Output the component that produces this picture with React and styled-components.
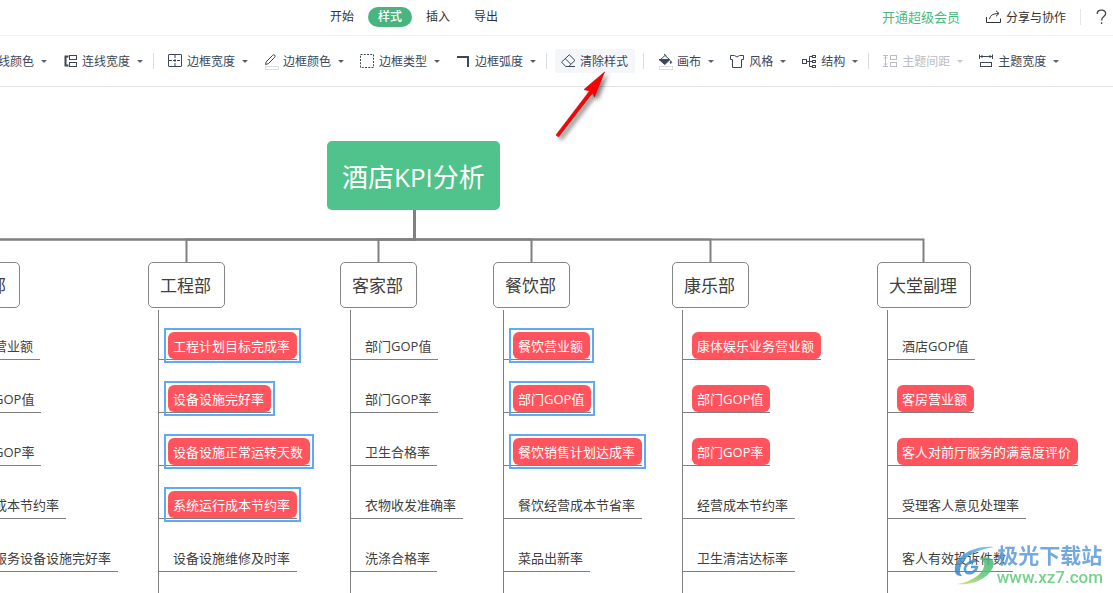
import React from "react";
import styled, { createGlobalStyle, css } from "styled-components";

const GlobalStyle = createGlobalStyle`
  * { box-sizing: border-box; }
  body {
    margin: 0;
    background: #fff;
    font-family: "Open Sans", "Noto Sans CJK SC", sans-serif;
    font-size: 12px;
    color: #333;
  }
  button {
    margin: 0;
    border: 0;
    background: none;
    font: inherit;
    color: inherit;
    cursor: pointer;
  }
  ul { list-style: none; margin: 0; padding: 0; }
  svg { display: block; flex: none; }
`;

const Page = styled.div`
  display: flex;
  flex-direction: column;
  height: 100vh;
  overflow: hidden;
`;

/* ---------- top bar ---------- */

const Header = styled.header`
  display: flex;
  align-items: center;
  justify-content: space-between;
  flex: none;
  height: 36px;
  padding: 0 6px 2px 320px;
  border-bottom: 1px solid #f0f0f0;
  white-space: nowrap;
`;

const Tabs = styled.nav`
  display: flex;
  gap: 4px;
`;

const Tab = styled.button`
  width: 44px;
  height: 20px;
  padding: 0;
  border-radius: 10px;
  line-height: 20px;
  ${(p) => p.$active && css`
    background: #4ab47e;
    color: #fff;
    font-weight: 500;
  `}
`;

const Account = styled.div`
  display: flex;
  align-items: center;
`;

const VipLink = styled.a`
  margin-right: 26px;
  font-size: 13px;
  color: #4ab97f;
  text-decoration: none;
`;

const ShareButton = styled.button`
  display: flex;
  align-items: center;
  gap: 4px;
  padding: 0;
`;

const HelpButton = styled.button`
  display: flex;
  margin-left: 14px;
  padding: 0 0 0 15px;
  border-left: 1px solid #e4e6e9;
`;

/* ---------- tool bar ---------- */

const Toolbar = styled.div`
  flex: none;
  height: 51px;
  border-bottom: 1px solid #e2e2e2;
  overflow: hidden;
`;

const ToolTrack = styled.div`
  display: flex;
  align-items: center;
  height: 50px;
  margin-left: -41px;
  white-space: nowrap;
  color: #3d4757;
`;

const Tool = styled.button`
  display: flex;
  align-items: center;
  flex: none;
  height: 24px;
  padding: 0 8px 0 7px;
  ${(p) => p.$highlight && css`
    margin: 0 6px 0 2px;
    padding: 0 7px 0 5px;
    border-radius: 2px;
    background: #f4f6f9;
  `}
  &:disabled { color: #b9bdc4; }
`;

const ToolLabel = styled.span`
  margin-left: 4px;
  padding-top: 2px;
  line-height: 22px;
`;

const Caret = styled.span`
  margin-left: 7px;
  border: 3px solid transparent;
  border-top-color: currentColor;
  border-bottom: 0;
  opacity: 0.85;
`;

const Separator = styled.span`
  flex: none;
  width: 1px;
  height: 16px;
  margin: 0 6px 0 2px;
  background: #d9dce0;
`;

/* ---------- mind map ---------- */

const Canvas = styled.main`
  position: relative;
  flex: 1;
  min-height: 0;
  overflow: hidden;
`;

const Connectors = styled.svg`
  position: absolute;
  top: 0;
  left: 0;
  width: 100%;
  height: 100%;
`;

const Root = styled.h1`
  position: absolute;
  top: 54px;
  left: 327px;
  margin: 0;
  padding: 4px 15px 0;
  border-radius: 5px;
  background: #50c28b;
  color: #fff;
  font-size: 26px;
  font-weight: 400;
  line-height: 65px;
  white-space: nowrap;
`;

const Branches = styled.div`
  position: absolute;
  top: 175px;
  bottom: 0;
  left: -57px;
  display: flex;
  gap: 30px;
`;

const Branch = styled.section`
  display: flex;
  flex-direction: column;
  align-items: flex-start;
  flex: none;
  min-width: ${(p) => (p.$wide ? "175px" : "0")};
`;

const BranchTitle = styled.h2`
  flex: none;
  margin: 0;
  padding: 2px 13px 0 11px;
  border: 1px solid #858585;
  border-radius: 5px;
  background: #fff;
  font-size: 17px;
  font-weight: 400;
  line-height: 42px;
  color: #404040;
  white-space: nowrap;
`;

const Topics = styled.ul`
  display: flex;
  flex-direction: column;
  align-items: flex-start;
  flex: 1;
  gap: 3px;
  margin: 2px 0 0 10px;
  border-left: 1px solid #808080;
`;

const TopicRow = styled.li`
  padding: 22px 0 0 9px;
  border-bottom: 1px solid #808080;
`;

const Topic = styled.div`
  position: relative;
  padding: 1px 7px 0 5px;
  border-radius: 6px;
  font-size: 13px;
  line-height: 26px;
  white-space: nowrap;
  color: #404040;
  ${(p) => p.$filled && css`
    background: #ff545d;
    color: #fff;
  `}
  ${(p) => p.$selected && css`
    &::after {
      content: "";
      position: absolute;
      inset: -4px;
      border: 2px solid #62a9f5;
    }
  `}
`;

const Pointer = styled.svg`
  position: absolute;
  top: 66px;
  left: 550px;
  pointer-events: none;
`;

const Watermark = styled.div`
  position: absolute;
  right: 10px;
  bottom: 7px;
  display: flex;
  align-items: center;
  gap: 2px;
  opacity: 0.85;
  white-space: nowrap;
`;

const WatermarkText = styled.div`
  display: flex;
  flex-direction: column;
  align-items: center;
`;

const WatermarkName = styled.span`
  font-size: 21px;
  font-weight: 700;
  line-height: 25px;
  color: #5b9bd9;
`;

const WatermarkUrl = styled.span`
  font-family: Roboto, sans-serif;
  font-size: 17px;
  font-weight: 500;
  line-height: 18px;
  color: #5fc97c;
`;

/* ---------- icons ---------- */

const Glyph = ({ children }) => (
  <svg width="16" height="16" viewBox="0 0 16 16" fill="none" stroke="currentColor" overflow="visible" aria-hidden="true">
    {children}
  </svg>
);

const LineWidthIcon = () => (
  <Glyph>
    <path d="M6.5 3.5H3.5V12.5H6.5" strokeWidth="2" />
    <rect x="7.5" y="2.5" width="7" height="4" />
    <rect x="7.5" y="9.5" width="7" height="4" />
  </Glyph>
);

const BorderWidthIcon = () => (
  <Glyph>
    <rect x="1.5" y="1.5" width="13" height="12" rx="0.5" />
    <path d="M8 2V14M2 7.5H14" strokeDasharray="3 1" />
  </Glyph>
);

const PencilIcon = () => (
  <Glyph>
    <path d="M2.5 11.5L3.2 8.9L9.6 2.3Q10.8 1.3 11.7 2.2Q12.6 3.2 11.7 4.3L5.3 10.7Z" />
    <rect x="2.5" y="13.5" width="13" height="3" stroke="#dcdfe3" fill="#fff" />
  </Glyph>
);

const BorderTypeIcon = () => (
  <Glyph>
    <rect x="1.5" y="1.5" width="13" height="13" strokeDasharray="2 1.25" />
  </Glyph>
);

const CornerIcon = () => (
  <Glyph>
    <path d="M2 4H13V14" strokeWidth="2" />
  </Glyph>
);

const EraserIcon = () => (
  <Glyph>
    <path d="M2 8.6L9.3 1.8L15 7.4L8.6 13.5H5.8L2 9.6ZM5.2 5.7L10.9 11.2M5.8 13.5H15" />
  </Glyph>
);

const BucketIcon = () => (
  <Glyph>
    <path d="M3.5 6.5L8 2.5L12.5 6.5M7 1L9.5 3" />
    <path d="M2 6.5H13L7.8 11.5Z" fill="currentColor" />
    <path d="M13.8 7.5Q15.6 10 13.8 10.5Q12.2 10 13.8 7.5Z" fill="currentColor" strokeWidth="0.5" />
    <rect x="2.5" y="13.5" width="13" height="3" stroke="#dcdfe3" fill="#fff" />
  </Glyph>
);

const ShirtIcon = () => (
  <Glyph>
    <path d="M1.5 2.5H5.5Q8 5.5 10.5 2.5H14.5V6.5H12.5V14.5H3.5V6.5H1.5Z" />
  </Glyph>
);

const StructureIcon = () => (
  <Glyph>
    <rect x="1.5" y="6.5" width="4" height="4" />
    <path d="M6 8.5H11M11 3.5H8.5V13.5H11" />
    <rect x="11.5" y="2.5" width="3" height="2" />
    <rect x="11.5" y="7.5" width="3" height="2" />
    <rect x="11.5" y="12.5" width="3" height="2" />
  </Glyph>
);

const TopicGapIcon = () => (
  <Glyph>
    <path d="M1 2.5H6M1 13.5H6M3.5 3V13M2 5.5L3.5 4L5 5.5M2 10.5L3.5 12L5 10.5" />
    <rect x="8.5" y="2.5" width="6" height="4" />
    <rect x="8.5" y="9.5" width="6" height="4" />
  </Glyph>
);

const TopicWidthIcon = () => (
  <Glyph>
    <path d="M1.5 1.5V6M14.5 1.5V6M2 3.5H14M4.5 2L3 3.5L4.5 5M11.5 2L13 3.5L11.5 5" />
    <rect x="2.5" y="9.5" width="11" height="4" />
  </Glyph>
);

const ShareIcon = () => (
  <Glyph>
    <path d="M0.5 8V13.5H14.5V9.5M3.5 10Q4.5 4.5 12.5 4.5M10 1.8L13 4.5L10 7.3" />
  </Glyph>
);

const HelpIcon = () => (
  <svg width="11" height="16" viewBox="0 0 11 16" fill="none" stroke="#444" strokeWidth="1.3" aria-hidden="true">
    <path d="M1.2 5Q1.2 1.2 5.4 1.2Q9.6 1.2 9.6 4.6Q9.6 6.3 7.8 7.5Q5.6 8.9 5.6 11.5M5.6 13.2V15" />
  </svg>
);

const SwirlLogo = () => (
  <svg width="42" height="42" viewBox="0 0 42 42" aria-hidden="true">
    <defs>
      <linearGradient id="swirlBlue" x1="0" y1="1" x2="1" y2="0">
        <stop offset="0" stopColor="#2f7fc9" />
        <stop offset="1" stopColor="#6cb8ec" />
      </linearGradient>
      <linearGradient id="swirlGreen" x1="0" y1="1" x2="1" y2="0">
        <stop offset="0" stopColor="#e3e35a" />
        <stop offset="0.5" stopColor="#62c877" />
        <stop offset="1" stopColor="#3fb57a" />
      </linearGradient>
    </defs>
    <path d="M2 28C0 14 18 1 41 3C28 5 12 10 8 22C6 27 7 30 9 32C5 32 3 31 2 28Z" fill="url(#swirlBlue)" />
    <path d="M26 15C36 11 43 15 40 23C36 34 19 42 4 40C18 38 30 30 31 22C32 18 30 16 26 15Z" fill="url(#swirlGreen)" />
    <path d="M23 17C14 17 10 24 13 28C16 31 23 28 24 23H18" fill="none" stroke="#3d8fd0" strokeWidth="2.5" />
  </svg>
);

/* ---------- data ---------- */

const tabs = ["开始", "样式", "插入", "导出"];

const toolGroups = [
  [
    { label: "连线颜色", icon: PencilIcon },
    { label: "连线宽度", icon: LineWidthIcon },
  ],
  [
    { label: "边框宽度", icon: BorderWidthIcon },
    { label: "边框颜色", icon: PencilIcon },
    { label: "边框类型", icon: BorderTypeIcon },
    { label: "边框弧度", icon: CornerIcon },
  ],
  [{ label: "清除样式", icon: EraserIcon, highlight: true }],
  [
    { label: "画布", icon: BucketIcon },
    { label: "风格", icon: ShirtIcon },
    { label: "结构", icon: StructureIcon },
  ],
  [
    { label: "主题间距", icon: TopicGapIcon, disabled: true },
    { label: "主题宽度", icon: TopicWidthIcon },
  ],
];

const plain = (text) => ({ text });
const filled = (text) => ({ text, filled: true });
const selected = (text) => ({ text, filled: true, selected: true });

const branches = [
  {
    title: "客房部",
    topics: [
      plain("客房营业额"),
      plain("部门GOP值"),
      plain("部门GOP率"),
      plain("经营成本节约率"),
      plain("客房服务设备设施完好率"),
    ],
  },
  {
    title: "工程部",
    topics: [
      selected("工程计划目标完成率"),
      selected("设备设施完好率"),
      selected("设备设施正常运转天数"),
      selected("系统运行成本节约率"),
      plain("设备设施维修及时率"),
    ],
  },
  {
    title: "客家部",
    topics: [
      plain("部门GOP值"),
      plain("部门GOP率"),
      plain("卫生合格率"),
      plain("衣物收发准确率"),
      plain("洗涤合格率"),
    ],
  },
  {
    title: "餐饮部",
    topics: [
      selected("餐饮营业额"),
      selected("部门GOP值"),
      selected("餐饮销售计划达成率"),
      plain("餐饮经营成本节省率"),
      plain("菜品出新率"),
    ],
  },
  {
    title: "康乐部",
    wide: true,
    topics: [
      filled("康体娱乐业务营业额"),
      filled("部门GOP值"),
      filled("部门GOP率"),
      plain("经营成本节约率"),
      plain("卫生清洁达标率"),
    ],
  },
  {
    title: "大堂副理",
    topics: [
      plain("酒店GOP值"),
      filled("客房营业额"),
      filled("客人对前厅服务的满意度评价"),
      plain("受理客人意见处理率"),
      plain("客人有效投诉件数"),
    ],
  },
];

const branchCentres = [-220, -18, 186.5, 378.5, 531.5, 710.5, 923.5];

export default function App() {
  return (
    <Page>
      <GlobalStyle />
      <Header>
        <Tabs>
          {tabs.map((name) => (
            <Tab key={name} $active={name === "样式"}>{name}</Tab>
          ))}
        </Tabs>
        <Account>
          <VipLink href="#vip">开通超级会员</VipLink>
          <ShareButton><ShareIcon />分享与协作</ShareButton>
          <HelpButton aria-label="帮助"><HelpIcon /></HelpButton>
        </Account>
      </Header>

      <Toolbar role="toolbar">
        <ToolTrack>
          {toolGroups.map((group, index) => (
            <React.Fragment key={index}>
              {index > 0 && <Separator />}
              {group.map(({ label, icon: Icon, highlight, disabled }) => (
                <Tool key={label} $highlight={highlight} disabled={disabled}>
                  <Icon />
                  <ToolLabel>{label}</ToolLabel>
                  {!highlight && <Caret />}
                </Tool>
              ))}
            </React.Fragment>
          ))}
        </ToolTrack>
      </Toolbar>

      <Canvas>
        <Connectors fill="none" stroke="#808080" strokeWidth="2" aria-hidden="true">
          {branchCentres.map((x) => (
            <path key={x} d={`M414.5 122V152.5H${x}V176`} />
          ))}
        </Connectors>
        <Root>酒店KPI分析</Root>
        <Branches>
          {branches.map((branch) => (
            <Branch key={branch.title} $wide={branch.wide}>
              <BranchTitle>{branch.title}</BranchTitle>
              <Topics>
                {branch.topics.map((topic) => (
                  <TopicRow key={topic.text}>
                    <Topic $filled={topic.filled} $selected={topic.selected}>{topic.text}</Topic>
                  </TopicRow>
                ))}
              </Topics>
            </Branch>
          ))}
        </Branches>
        <Watermark>
          <SwirlLogo />
          <WatermarkText>
            <WatermarkName>极光下载站</WatermarkName>
            <WatermarkUrl>www.xz7.com</WatermarkUrl>
          </WatermarkText>
        </Watermark>
      </Canvas>

      <Pointer width="70" height="80" viewBox="0 0 70 80" aria-hidden="true">
        <defs>
          <filter id="pointerShadow" x="-20%" y="-20%" width="150%" height="150%">
            <feDropShadow dx="3" dy="3" stdDeviation="2" floodColor="#000" floodOpacity="0.5" />
          </filter>
        </defs>
        <path
          d="M54.5 6L34 23.5L39.5 25L6 69L8.5 71L42.5 27L44.5 31Z"
          fill="#f00"
          stroke="#a01818"
          strokeWidth="0.6"
          strokeLinejoin="round"
          filter="url(#pointerShadow)"
        />
      </Pointer>
    </Page>
  );
}
